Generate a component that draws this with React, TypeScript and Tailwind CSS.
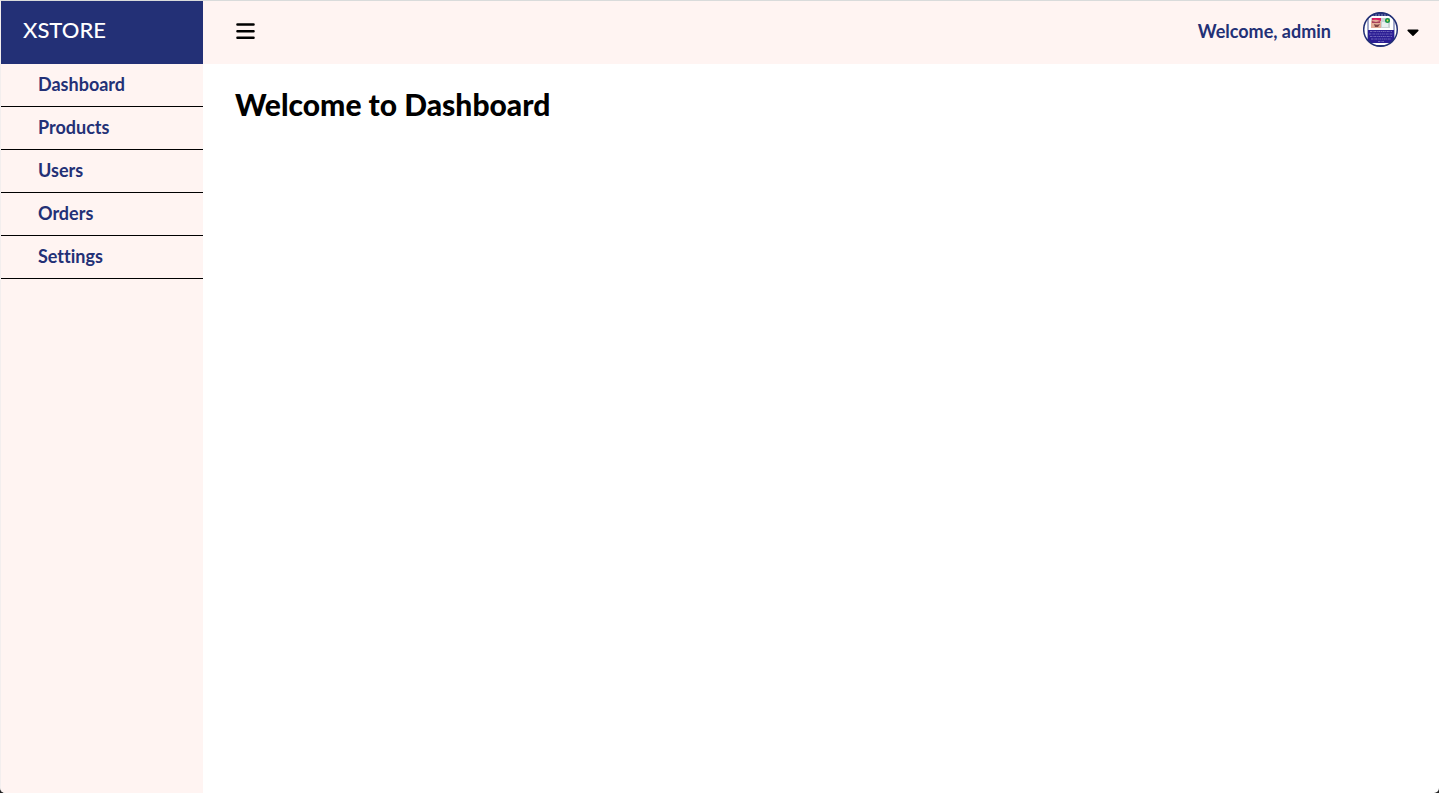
import React from 'react';
import { FaCaretDown } from 'react-icons/fa';

const links = ['Dashboard', 'Products', 'Users', 'Orders', 'Settings'];

function Avatar() {
  return (
    <svg viewBox="0 0 36 36" className="size-9" role="img" aria-label="Profile picture">
      <defs>
        <clipPath id="avatar-clip">
          <circle cx="17.500" cy="17.500" r="17" />
        </clipPath>
      </defs>
      <g clipPath="url(#avatar-clip)">
        <rect width="36" height="36" fill="#ffffff" />
        <rect x="4" width="28" height="4" fill="#27327a" />
        <path d="M9 3h18" stroke="#8f93c4" strokeWidth="1" strokeDasharray="2 1" />
        <path d="M5 4v28M31 4v28" stroke="#4a5598" strokeWidth="1" />
        <rect x="8" y="6" width="19" height="10" fill="#c9d3d4" />
        <path d="M9 6h9v4H9z" fill="#d81b60" />
        <path d="M8 9c3-2 6-1 10 0v7H8z" fill="#e3ac98" />
        <path d="M9 9l4 1 4-1v2H9z" fill="#a9405c" />
        <path d="M11 12c2 1 4 1 6 0l-2 3h-3z" fill="#7d4545" />
        <rect x="19" y="10" width="6" height="5" fill="#e8efef" />
        <circle cx="24.500" cy="8.500" r="2.500" fill="#13934a" />
        <circle cx="24.500" cy="8.500" r="0.900" fill="#e6e24a" />
        <rect x="5" y="18" width="26" height="13" fill="#2b1d94" />
        <path
          d="M7 19.500h22M6 22h24M7 24.500h22M8 27h20M15 29.500h6"
          stroke="#6f66ba"
          strokeWidth="1"
          strokeDasharray="2 0.600 1 0.600"
        />
        <rect x="12" y="33" width="12" height="3" fill="#27327a" />
      </g>
      <circle cx="17.500" cy="17.500" r="16.800" fill="none" stroke="#233076" strokeWidth="1.500" />
    </svg>
  );
}

export default function App() {
  return (
    <div className="bg-[#222]">
      <div className="flex min-h-screen overflow-hidden rounded-b-[5px] border-t border-l border-t-[#d9dbdb] border-l-[#f3eeee] bg-white font-['Lato',sans-serif] [font-variant-ligatures:none]">
        <aside className="w-[202px] shrink-0 bg-[#fff4f2] text-[#233076]">
          <div className="flex h-[63px] items-center bg-[#233076] px-[22px] pb-1.5">
            <a href="#" className="text-[22px] leading-7 font-medium text-white">XSTORE</a>
          </div>
          <nav>
            <ul>
              {links.map((label) => (
                <li key={label} className="border-b border-black">
                  <a href="#" className="block px-[37px] pt-2 pb-[10px] text-lg leading-6 font-bold">
                    {label}
                  </a>
                </li>
              ))}
            </ul>
          </nav>
        </aside>
        <div className="min-w-0 flex-1">
          <header className="flex h-[63px] items-center justify-between bg-[#fff4f2] pr-5 pl-8">
            <button type="button" aria-label="Toggle menu" className="pb-1">
              <svg viewBox="0 0 21 18" className="h-[18px] w-[21px]" aria-hidden="true">
                <path
                  d="M2.500 2.500h16M2.500 9.200h16M2.500 15.800h16"
                  stroke="#000"
                  strokeWidth="2.600"
                  strokeLinecap="round"
                />
              </svg>
            </button>
            <div className="flex items-center pb-1">
              <span className="text-lg leading-6 font-bold text-[#233076]">Welcome, admin</span>
              <button type="button" aria-label="Account menu" className="ml-8 flex items-center gap-2 pb-0.5">
                <Avatar />
                <FaCaretDown className="mt-1 h-5 w-3" />
              </button>
            </div>
          </header>
          <main className="px-8 pt-[22px] pb-6">
            <h1 className="font-['Lato_Black','Lato',sans-serif] text-3xl leading-9 font-black">
              Welcome to Dashboard
            </h1>
          </main>
        </div>
      </div>
    </div>
  );
}
